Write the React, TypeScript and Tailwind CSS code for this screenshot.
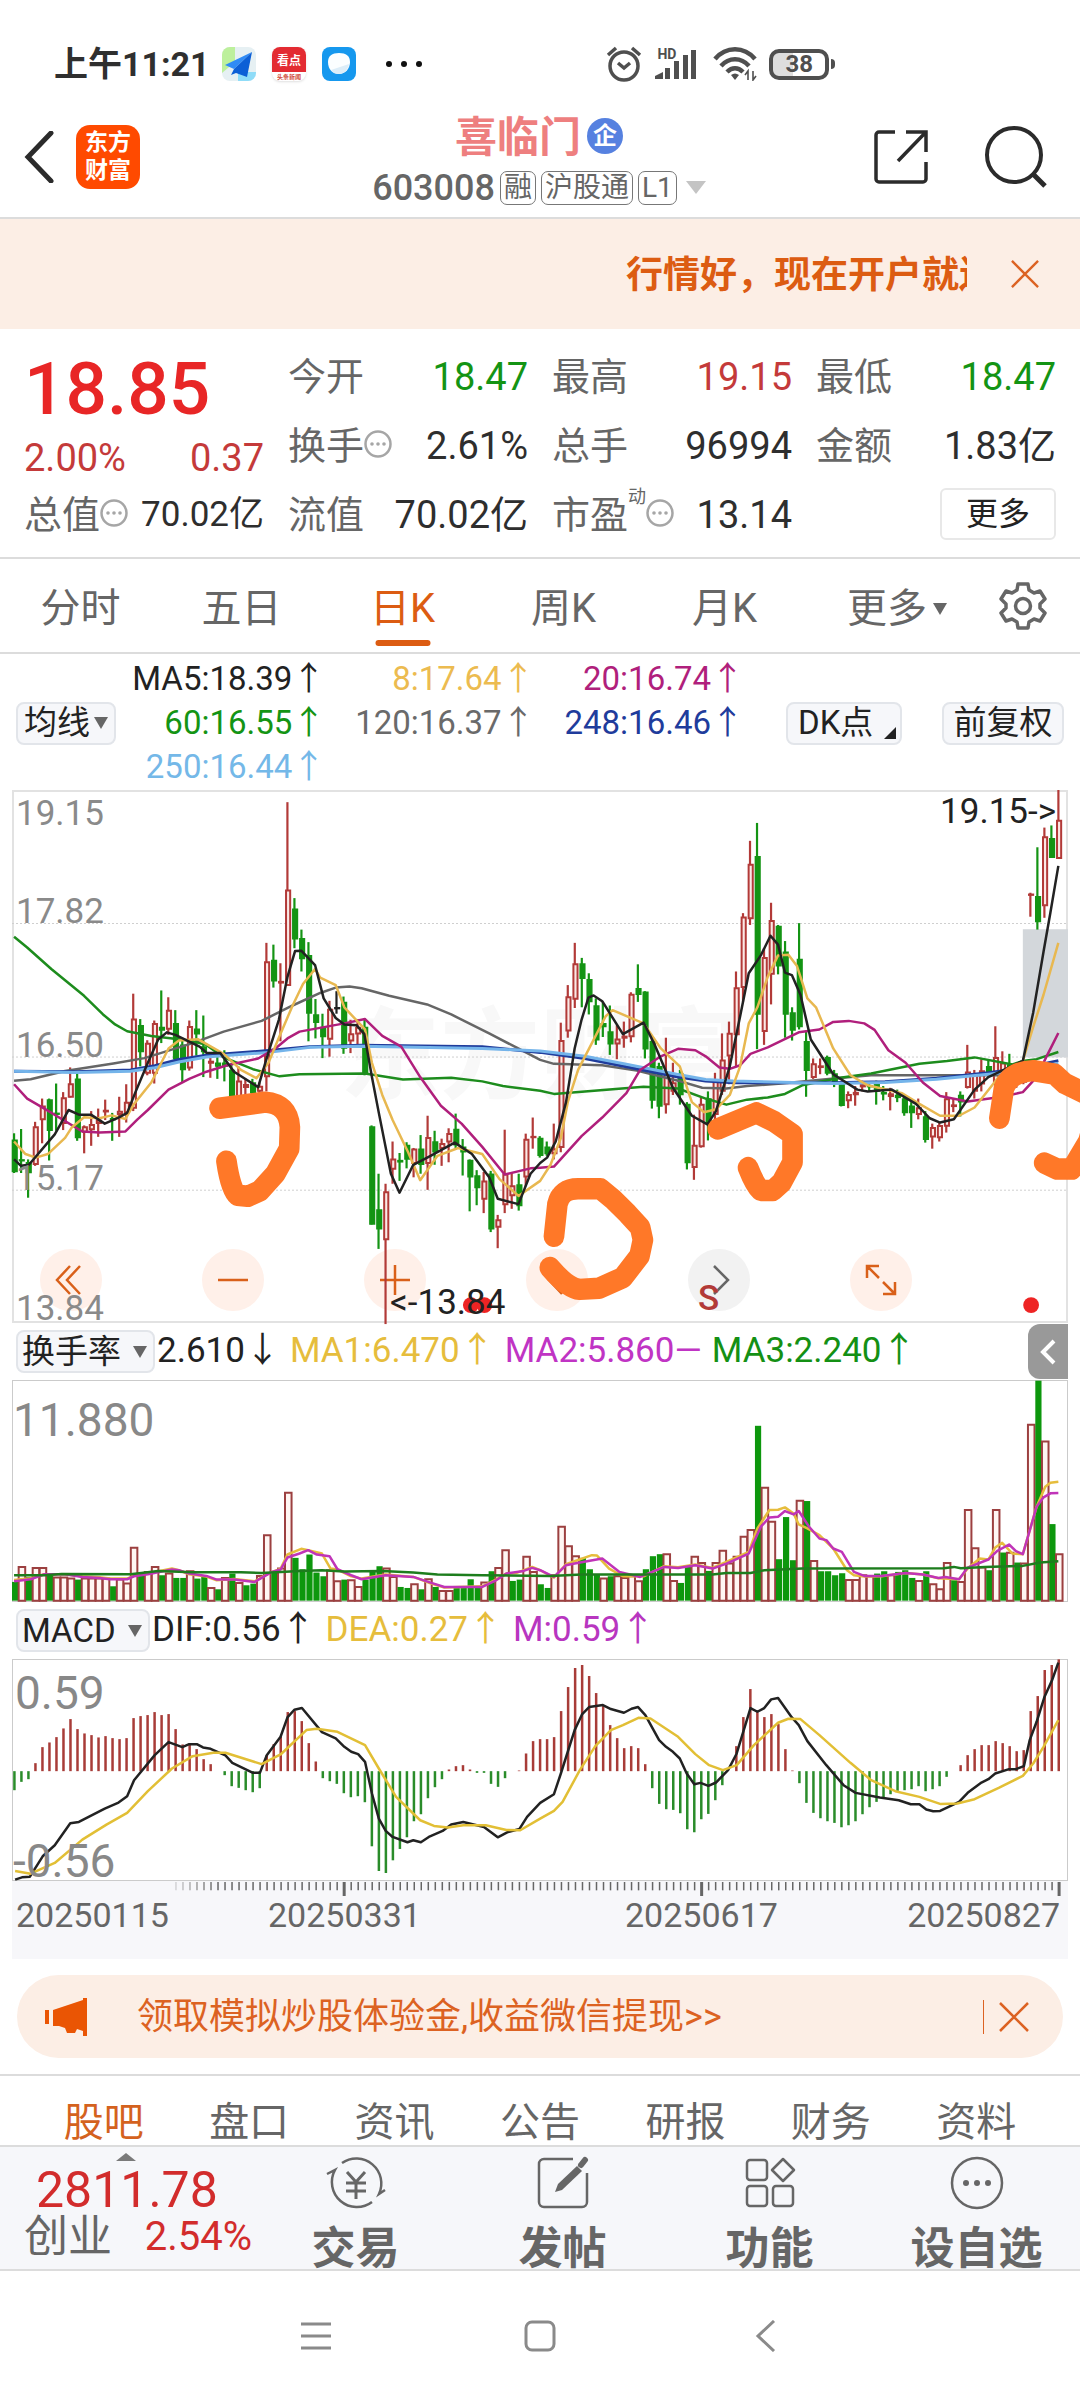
import React from "react";

/**
 * Mobile quote page for a single stock:
 * - status bar, title bar, marquee banner, quote figures and period tabs
 * - daily candles with moving averages, turnover rate and MACD panels
 * - promo strip, content tabs, action bar and the system navigation keys
 *
 * The three panels share one horizontal scale: candle i sits at barX(i).
 */

const PLOT_LEFT = 36;
const PLOT_WIDTH = 3063;
const STEP = 20.33;
const barX = (i: number) => 42 + STEP * i;

const RED = "#b23a38";
const GREEN = "#149414";
const INK = "#222222";

// colour, high, body top, body bottom, low
const CANDLES = `
g987,1005,1095,1098 g975,1060,1065,1098 g1060,1068,1098,1167 r955,968,1075,1078 r890,910,950,1015
g890,893,980,1063 g848,930,935,980 r872,887,960,978 r803,848,887,887 g815,835,1000,1008
r965,968,985,1043 r925,962,978,1022 r918,950,960,997 r893,922,928,950 g930,945,950,1008
r885,925,935,997 r850,900,930,957 r597,667,918,925 g668,685,760,800 r727,735,820,825
r672,680,820,848 g588,690,700,735 r607,643,697,712 g643,680,780,790 g720,740,810,845
r672,688,805,812 g643,695,710,770 g658,745,760,830 r775,785,792,832 g770,790,800,835
g755,790,800,842 g790,810,885,890 r800,840,885,890 r835,850,860,885 g835,845,875,880
r845,855,870,880 r455,507,830,870 g460,503,562,580 r512,562,568,730 r62,307,575,575
g330,360,445,470 g418,442,500,535 g453,490,652,730 g612,655,678,722 g653,690,718,777
r617,640,725,773 k590,635,640,653 g605,620,750,765 r670,708,730,763 r668,690,710,740
g665,690,820,825 g965,968,1242,1242 g1100,1200,1255,1310 r1128,1150,1285,1520 r1010,1058,1088,1128
g1042,1062,1068,1120 g1012,1020,1060,1085 r1028,1030,1072,1110 g992,1030,1075,1100 r938,998,1072,1145
g980,1010,1040,1075 r1002,1015,1030,1078 r973,987,1012,1068 g932,975,1020,1030 g1003,1025,1040,1105
g1060,1062,1110,1205 g1090,1105,1140,1188 r1095,1120,1172,1210 g1092,1100,1255,1263 r1215,1228,1250,1308
r977,1100,1187,1210 r1098,1133,1162,1198 g1100,1130,1190,1203 r988,1003,1110,1135 r943,995,1000,1030
g995,1000,1050,1055 g1010,1025,1045,1050 r960,1030,1045,1060 r678,727,1027,1040 r573,605,702,720
r455,513,613,637 g497,513,555,635 g540,557,620,655 g610,630,727,740 g620,680,690,718
g630,703,738,768 r685,723,738,780 r675,715,722,748 r593,598,718,733 g515,582,600,620
g590,592,752,778 g725,730,895,918 g790,800,912,945 r720,820,908,932 r790,845,870,880
g810,820,880,907 g900,905,1070,1088 r935,1020,1083,1117 r885,905,1025,1027 g870,890,960,1007
r818,840,935,965 r708,782,870,880 r675,707,772,850 r535,580,712,800 r372,382,580,620
r170,235,388,405 g120,213,655,752 r470,495,703,740 r343,392,543,627 g405,408,520,543
g450,480,655,720 g635,650,700,728 g400,500,690,697 g700,730,812,885 r778,792,832,835
r778,798,804,822 g770,775,820,825 g810,820,845,858 g845,850,910,912 r870,878,897,917
r855,872,880,910 r840,850,858,870 g845,853,858,870 g840,848,870,907 g855,872,878,895
r860,876,885,923 g865,880,888,900 g880,890,930,938 g900,910,930,972 r890,915,935,948
g925,940,1005,1013 r960,970,998,1030 r958,965,1000,1010 r872,890,968,985 r890,907,913,928
g870,880,900,940 r740,815,860,862 r810,820,870,890 r780,812,850,870 g785,800,825,830
r688,775,850,862 r758,790,830,870 g765,795,820,880 r800,815,830,860 r778,785,845,850
r315,318,322,382 g188,325,397,418 r133,158,352,385 g127,163,217,218 r28,112,220,220
`
  .trim()
  .split(/\s+/)
  .map((s) => {
    const [high, top, bottom, low] = s.slice(1).split(",").map(Number);
    return { color: s[0] === "r" ? RED : s[0] === "g" ? GREEN : INK, hollow: s[0] === "r", high, top, bottom, low };
  });

const PRICE_LINES: { name: string; color: string; width: number; points: string }[] = [
  {
    name: "MA120",
    color: "#666666",
    width: 2.5,
    points:
      "42,840 90,836 190,813 330,792 420,777 560,735 650,703 760,673 850,630 930,595 975,580 1015,577 1050,582 1130,603 1240,627 1310,655 1420,708 1500,748 1568,782 1608,793 1748,797 1848,812 1968,840 2038,860 2108,862 2168,855 2268,848 2428,833 2528,825 2908,825 2968,812",
  },
  {
    name: "MA60",
    color: "#1d8c1d",
    width: 2.5,
    points:
      "42,438 80,468 150,528 245,603 300,655 335,683 370,702 440,715 550,728 600,740 650,775 735,808 812,828 870,822 1060,820 1170,837 1310,832 1400,842 1460,855 1568,868 1608,877 1868,857 1968,862 2048,890 2108,907 2168,893 2228,887 2278,877 2328,853 2438,832 2528,820 2668,793 2748,785 2828,775 2938,795 2968,785 3008,780 3071,760",
  },
  {
    name: "MA248",
    color: "#1f3c9c",
    width: 3,
    points:
      "42,814 220,815 380,810 450,798 520,781 600,769 780,756 900,745 1050,741 1400,745 1568,761 1698,778 1818,801 1968,830 2048,841 2128,846 2418,846 2568,843 2718,833 2868,818 2968,805 3071,784",
  },
  {
    name: "MA250",
    color: "#74b4ea",
    width: 3,
    points:
      "42,814 220,817 380,814 450,804 520,788 600,774 780,761 900,747 1050,744 1400,750 1568,757 1698,772 1818,794 1968,823 2048,837 2128,841 2418,848 2568,845 2718,836 2868,822 2968,811 3071,791",
  },
  {
    name: "MA20",
    color: "#b01f7c",
    width: 2.5,
    points:
      "42,850 80,890 130,918 240,982 290,985 365,982 400,948 430,922 490,865 550,835 600,815 660,797 750,778 800,750 835,722 870,703 1000,680 1060,668 1110,715 1165,745 1220,830 1280,910 1340,960 1400,1025 1465,1102 1540,1085 1568,1083 1608,1080 1688,995 1748,943 1818,875 1858,810 1918,772 1968,751 2018,755 2048,772 2088,803 2118,807 2148,797 2178,765 2228,747 2318,705 2378,697 2418,676 2463,673 2508,680 2538,698 2578,755 2628,790 2678,845 2728,883 2808,898 2908,885 2968,872 3008,830 3038,770 3071,707",
  },
  {
    name: "MA8",
    color: "#e8b850",
    width: 2.5,
    points:
      "42,1010 75,1045 105,1055 140,1045 190,1000 210,970 245,942 290,945 325,937 365,947 390,905 440,845 490,750 520,728 575,724 650,765 700,810 745,833 780,790 810,720 850,630 880,570 915,528 930,552 975,573 1000,635 1060,697 1080,790 1110,880 1140,950 1185,1040 1220,1118 1270,1050 1330,1028 1400,1045 1450,1115 1505,1162 1568,1120 1598,1075 1628,1000 1648,900 1678,810 1718,735 1758,660 1778,643 1868,680 1918,750 1973,800 2008,900 2043,928 2078,920 2118,880 2148,800 2173,680 2198,635 2228,550 2258,490 2288,488 2313,520 2343,610 2368,635 2418,750 2468,825 2518,853 2618,875 2668,905 2728,938 2783,938 2828,915 2898,830 2968,785 2998,690 3028,600 3071,455",
  },
  {
    name: "MA5",
    color: INK,
    width: 2.5,
    points:
      "42,1060 62,1078 85,1075 160,990 200,922 230,935 265,935 305,960 345,943 370,930 395,870 430,790 460,725 485,705 510,712 580,745 600,762 640,763 680,815 750,858 780,760 810,670 835,550 857,478 875,477 915,517 940,610 975,665 1000,683 1035,685 1058,710 1080,830 1100,930 1135,1100 1160,1153 1200,1075 1250,1050 1320,1013 1370,1045 1420,1110 1445,1170 1505,1185 1540,1100 1568,1070 1588,1055 1613,1010 1643,900 1668,750 1688,670 1708,608 1723,602 1748,618 1808,710 1868,678 1898,735 1953,860 2008,938 2053,962 2078,925 2118,800 2148,660 2173,540 2208,490 2236,435 2258,460 2278,538 2298,545 2323,600 2353,725 2418,822 2488,865 2518,870 2588,865 2658,905 2698,945 2728,957 2768,948 2828,865 2868,830 2968,785 2998,650 3028,480 3048,370 3071,240",
  },
];

// hand-drawn marks over the candles
const MARKS = [
  "M638,917 L770,900 Q838,905 842,970 L840,1030 L800,1100 L755,1148 L720,1163 L690,1160 Q670,1145 658,1065",
  "M1608,1275 L1618,1185 Q1628,1142 1678,1142 L1743,1142 L1778,1170 L1822,1212 L1858,1250 L1866,1285 L1856,1330 L1808,1390 L1738,1420 L1683,1423 Q1648,1420 1596,1362",
  "M2083,975 L2195,930 L2248,955 L2300,990 L2300,1068 L2268,1125 L2243,1147 L2208,1147 Q2190,1130 2171,1083",
  "M2900,945 L2913,862 Q2930,815 2998,812 L3060,822 L3090,848 L3158,880 L3178,940 L3158,1010 L3110,1087 L3068,1087 L3030,1070",
];

const TURNOVER = `
g785 r740 g770 r743 r743 g765 r772 r772 r775 g778 r775 r775 r775 r775 g798 r778 r790 r683 g765 r755
r740 g765 r760 g773 g773 r753 g775 g770 r803 g807 r773 g760 r788 g795 g790 r767 r645 g755 r745 r518
g713 g747 g703 g757 g768 r750 r783 g778 r780 r800 g778 g755 g738 r745 r770 g800 g803 r792 g807 r777
g800 r812 r812 g803 g800 g777 g803 r787 g753 r743 r690 g782 g778 r710 r755 g792 g803 r765 r620 r678
r708 g713 g747 g763 r775 g768 r768 r773 r768 r783 g747 g708 g702 r702 r782 g788 g740 r710 r728 g752
r728 r692 r730 r710 r650 r630 g318 r503 r605 g717 g591 g720 r542 g543 r722 g753 g753 g765 g759 r779
r779 r765 r768 g760 g753 r765 g755 g750 g773 r782 g753 r792 r807 r728 g780 r785 r570 r684 r742 g750
r570 g697 r698 g727 r730 r315 g183 r365 g612 r702
`
  .trim()
  .split(/\s+/)
  .map((s) => ({ hollow: s[0] === "r", top: Number(s.slice(1)) }));

const TURNOVER_LINES = [
  {
    color: "#e6bd3c",
    points:
      "42,779 90,774 130,762 190,762 240,768 290,771 320,775 370,775 390,766 430,760 500,745 520,750 550,762 600,769 630,780 680,776 740,783 765,768 790,755 815,746 835,703 875,686 895,690 935,700 960,745 980,748 1020,768 1050,775 1120,763 1200,770 1250,789 1290,802 1400,798 1440,778 1470,760 1500,758 1545,740 1568,750 1608,772 1643,732 1718,705 1733,706 1768,745 1808,768 1868,768 1928,738 1968,741 2018,733 2068,743 2108,725 2173,695 2198,625 2233,570 2258,569 2278,562 2303,580 2318,613 2343,625 2378,645 2418,685 2458,750 2478,765 2508,769 2558,768 2628,758 2678,763 2723,774 2783,777 2808,745 2843,715 2868,718 2888,682 2908,668 2938,700 2968,702 3008,560 3033,500 3048,488 3071,485",
  },
  {
    color: "#c034b8",
    points:
      "42,783 90,777 130,762 190,762 240,770 290,773 320,777 370,777 390,768 430,762 500,748 520,750 550,760 600,767 630,778 680,778 740,785 765,770 790,755 815,748 835,712 870,700 895,690 920,703 957,708 980,747 1020,765 1050,777 1120,765 1200,770 1250,787 1290,800 1400,800 1440,780 1470,760 1520,752 1545,743 1568,750 1608,770 1643,735 1668,730 1748,715 1798,755 1858,770 1928,740 1968,743 2018,735 2068,745 2108,730 2173,700 2208,620 2233,592 2258,590 2278,573 2303,583 2318,573 2348,620 2378,655 2398,660 2418,685 2443,695 2478,755 2508,767 2558,767 2628,758 2678,763 2723,773 2743,770 2783,777 2808,742 2868,718 2893,693 2928,673 2948,693 2968,702 3008,560 3028,532 3048,520 3071,519",
  },
  {
    color: "#1d7d1d",
    points:
      "42,765 130,765 180,761 380,762 460,752 560,756 700,756 760,758 870,752 935,750 1000,754 1110,752 1200,757 1270,763 1400,765 1598,767 1688,763 2068,763 2108,758 2178,758 2218,750 2328,745 2738,744 2768,740 2788,744 2858,740 2968,737 3018,727 3071,723",
  },
];

const MACD_ZERO = 513;
const MACD = [
  570, 545, 537, 489, 441, 427, 411, 385, 357, 387, 400, 405, 412, 408, 414, 417, 414, 354, 348, 345, 336, 345, 342,
  387, 433, 430, 447, 477, 492, 513, 525, 558, 563, 570, 576, 564, 465, 432, 410, 336, 333, 363, 429, 484, 534, 543,
  551, 579, 591, 588, 606, 738, 812, 818, 780, 746, 711, 663, 642, 594, 561, 537, 508, 498, 495, 508, 518, 518, 551,
  560, 534, 513, 511, 460, 423, 417, 417, 411, 333, 261, 204, 195, 228, 279, 318, 375, 414, 444, 438, 444, 492, 564,
  611, 627, 629, 639, 687, 696, 657, 641, 600, 555, 513, 438, 351, 267, 336, 351, 342, 372, 447, 511, 549, 608, 638,
  654, 663, 668, 681, 675, 663, 642, 621, 605, 595, 582, 572, 570, 567, 558, 573, 567, 558, 530, 513, 495, 465, 447,
  435, 435, 423, 429, 438, 453, 450, 333, 288, 210, 195, 178,
];
const DIF =
  "45,838 65,831 88,829 125,768 160,735 205,669 230,665 305,625 345,607 370,588 390,540 450,465 490,426 530,441 550,432 572,432 590,442 612,446 655,466 675,488 735,518 755,518 775,465 815,410 835,352 855,329 877,324 935,396 975,415 1000,440 1020,455 1040,462 1060,485 1080,580 1100,655 1120,692 1140,710 1183,726 1200,720 1222,726 1245,710 1285,692 1310,673 1345,665 1405,680 1445,711 1475,695 1508,686 1530,650 1568,608 1608,582 1628,520 1668,390 1690,342 1710,321 1750,315 1773,327 1811,338 1833,326 1852,321 1873,345 1913,420 1933,440 1953,455 1973,475 1993,520 2015,552 2033,548 2056,557 2078,547 2113,510 2138,460 2178,324 2198,335 2218,324 2238,298 2258,294 2298,352 2318,375 2343,423 2398,495 2448,555 2483,578 2553,592 2608,600 2643,612 2668,612 2688,628 2708,633 2728,632 2748,622 2783,605 2808,578 2848,547 2868,537 2888,520 2928,507 2948,507 2971,498 2988,420 3008,365 3031,290 3053,240 3071,188";
const DEA =
  "45,812 90,820 160,788 240,718 310,673 370,638 430,573 500,505 560,468 620,458 655,458 760,492 815,463 890,390 920,386 980,395 1060,435 1100,505 1150,590 1220,660 1260,677 1300,682 1345,675 1410,675 1470,689 1510,690 1568,655 1608,632 1633,605 1683,510 1728,438 1773,390 1808,375 1853,353 1888,355 1968,410 2018,462 2058,495 2098,510 2138,495 2188,435 2258,368 2288,356 2323,357 2378,405 2468,488 2528,540 2598,573 2668,590 2728,611 2778,610 2828,597 2898,563 2968,527 2998,490 3028,440 3071,360";

const Line = ({ points, color, width = 2.5 }: { points: string; color: string; width?: number }) => (
  <polyline
    points={points}
    fill="none"
    stroke={color}
    strokeWidth={width}
    strokeLinejoin="round"
    vectorEffect="non-scaling-stroke"
  />
);

const Triangle = ({ className }: { className: string }) => (
  <svg viewBox="0 0 14 12" preserveAspectRatio="none" className={className} fill="currentColor" aria-hidden="true">
    <path d="M0 0h14L7 12z" />
  </svg>
);

const Close = ({ className }: { className: string }) => (
  <svg viewBox="0 0 30 30" className={className} fill="none" stroke="#dc6222" strokeWidth="2.5" aria-hidden="true">
    <path d="M1 1l28 28M29 1L1 29" />
  </svg>
);

const Dots = () => (
  <svg viewBox="0 0 28 28" className="mb-1.5 h-7 w-7 shrink-0 text-[#a6a6a6]" aria-hidden="true">
    <circle cx="14" cy="14" r="12.5" fill="none" stroke="currentColor" strokeWidth="2.5" />
    <g fill="currentColor">
      <circle cx="8" cy="14" r="1.8" />
      <circle cx="14" cy="14" r="1.8" />
      <circle cx="20" cy="14" r="1.8" />
    </g>
  </svg>
);

function StatusBar() {
  return (
    <div className="flex h-24 items-center pt-8 pl-[54px] text-[#2f2f2f]">
      <span className="w-[168px] text-[34px] font-bold whitespace-nowrap">上午11:21</span>
      <div className="flex items-center gap-4">
        <svg viewBox="0 0 34 34" className="h-[34px] w-[34px]" aria-hidden="true">
          <rect width="34" height="34" rx="8" fill="#e6f0f3" />
          <path d="M0 8a8 8 0 0 1 8-8h5v15L0 26z" fill="#bdf09c" />
          <path d="M16 34V25h18v1a8 8 0 0 1-8 8z" fill="#8fdcf8" />
          <path d="M30 5L3 18l9 4z" fill="#2f8bf5" />
          <path d="M30 5L12 22l-3 6 5-2 11 4z" fill="#0c5fd6" />
        </svg>
        <div className="h-[34px] w-[34px] overflow-hidden rounded-lg bg-white text-center shadow-sm">
          <div className="h-[25px] bg-[#e32b32] text-[12px] leading-7 font-bold text-white">看点</div>
          <div className="h-[9px] text-[6px] leading-[9px] font-bold text-[#d04a3a]">头条新闻</div>
        </div>
        <svg viewBox="0 0 34 34" className="h-[34px] w-[34px]" aria-hidden="true">
          <rect width="34" height="34" rx="8" fill="#1698ee" />
          <path d="M17 6c7 0 11 3 11 9 0 7-5 12-11 12S6 23 6 15c0-6 4-9 11-9z" fill="#fbfeff" />
          <path d="M27 17c-1 6-5 10-10 10-3 0-6-1-8-4z" fill="#dcedf8" />
        </svg>
      </div>
      <svg viewBox="0 0 36 6" className="ml-[30px] h-1.5 w-9" fill="#111" aria-hidden="true">
        <circle cx="3" cy="3" r="3" />
        <circle cx="18" cy="3" r="3" />
        <circle cx="33" cy="3" r="3" />
      </svg>
      <div className="ml-auto flex items-center pr-[245px] text-[#4f4f4f]">
        <svg viewBox="0 0 36 36" className="h-9 w-9" fill="none" stroke="currentColor" strokeWidth="3.5" aria-hidden="true">
          <circle cx="18" cy="20" r="14" />
          <path d="M12 17l6 5 6-5M2 9l8-7M34 9l-8-7" />
        </svg>
        <span className="ml-[15px] self-start text-[14px] leading-4 font-bold">HD</span>
        <svg viewBox="0 0 42 30" className="-ml-[21px] h-[30px] w-[42px]" fill="currentColor" aria-hidden="true">
          <path d="M0 30v-3l8-4v7zM10 19h5v11h-5zM19 12h5v18h-5zM28 6h5v24h-5zM36 1h5v29h-5z" />
        </svg>
        <svg viewBox="0 0 44 34" className="ml-4 h-[34px] w-11" aria-hidden="true">
          <g fill="none" stroke="currentColor" strokeWidth="4.5">
            <path d="M2 12c11-13 29-13 40 0M8 19c8-9 20-9 28 0M14 25c5-5 11-5 16 0" />
          </g>
          <path d="M18 28q4-3 8 0l-4 5z" fill="currentColor" />
          <path d="M35 33V24l-3 4M40 24v9l3-4" fill="none" stroke="currentColor" strokeWidth="1.6" />
        </svg>
        <span className="ml-3 rounded-[10px] border-4 border-[#4f4f4f] bg-[linear-gradient(90deg,#dedede_38%,#fff_38%)] px-3 text-[24px] leading-[23px] font-bold">
          38
        </span>
        <span className="ml-0.5 h-2.5 w-1 rounded-r bg-[#4f4f4f]" />
      </div>
    </div>
  );
}

function TitleBar() {
  return (
    <header className="flex h-[123px] items-center justify-between border-b-2 border-[#dcdcdc] px-6 pr-8 text-[#2b2b2b]">
      <div className="flex w-[250px] items-center gap-[22px]">
        <button aria-label="返回">
          <svg viewBox="0 0 30 52" className="h-[52px] w-[30px]" fill="none" stroke="currentColor" strokeWidth="5" aria-hidden="true">
            <path d="M27 2L4 26l23 24" strokeLinecap="round" />
          </svg>
        </button>
        <div className="flex h-16 w-16 items-center justify-center rounded-[14px] bg-[#ff4a00] text-center text-[23px] leading-7 font-bold text-white">
          东方
          <br />
          财富
        </div>
      </div>
      <div className="flex flex-col items-center gap-2 pt-1.5">
        <div className="flex h-12 items-center gap-1.5">
          <h1 className="text-[42px] leading-[48px] font-bold text-[#ee7f7f]">喜临门</h1>
          <span className="mb-1 h-9 w-9 rounded-full bg-[#5681e0] text-center text-[24px] leading-9 font-bold text-white">企</span>
        </div>
        <div className="flex h-9 items-center gap-[5px] text-[#666]">
          <span className="text-[36px] leading-9 font-medium">603008</span>
          {["融", "沪股通", "L1"].map((tag) => (
            <span key={tag} className="rounded-[7px] border border-[#777] px-[3px] text-[28px] leading-8">
              {tag}
            </span>
          ))}
          <Triangle className="ml-1 h-[13px] w-5 text-[#c4c4c4]" />
        </div>
      </div>
      <div className="flex w-[244px] items-center justify-end gap-14">
        <button aria-label="分享">
          <svg viewBox="0 0 54 54" className="h-[54px] w-[54px]" fill="none" stroke="currentColor" strokeWidth="3.5" aria-hidden="true">
            <path d="M21 2H5a3 3 0 0 0-3 3v44a3 3 0 0 0 3 3h44a3 3 0 0 0 3-3V32M32 2h20v20M51 3L24 31" />
          </svg>
        </button>
        <button aria-label="搜索">
          <svg viewBox="0 0 64 64" className="h-16 w-16" fill="none" stroke="currentColor" strokeWidth="4" aria-hidden="true">
            <circle cx="30" cy="30" r="27" />
            <path d="M49 49l12 12" strokeWidth="5" />
          </svg>
        </button>
      </div>
    </header>
  );
}

type QuoteCell = { label: string; value: string; color?: string; info?: boolean; sup?: string };

const QUOTE_TOP: QuoteCell[] = [
  { label: "今开", value: "18.47", color: "text-[#149414]" },
  { label: "最高", value: "19.15", color: "text-[#c43a3a]" },
  { label: "最低", value: "18.47", color: "text-[#149414]" },
  { label: "换手", value: "2.61%", info: true },
  { label: "总手", value: "96994" },
  { label: "金额", value: "1.83亿" },
];
const QUOTE_BOTTOM: QuoteCell[] = [
  { label: "总值", value: "70.02亿", color: "text-[35px] text-[#2e2e2e]", info: true },
  { label: "流值", value: "70.02亿" },
  { label: "市盈", value: "13.14", info: true, sup: "动" },
];

const Cell = ({ label, value, color = "text-[#2e2e2e]", info, sup }: QuoteCell) => (
  <div className="flex h-[69px] items-center justify-between text-[38px] whitespace-nowrap">
    <span className="flex items-center text-[#666]">
      {label}
      {sup && <sup className="mb-5 text-[18px]">{sup}</sup>}
      {info && <Dots />}
    </span>
    <span className={color}>{value}</span>
  </div>
);

function Quote() {
  return (
    <section className="grid grid-cols-4 gap-x-6 border-b-2 border-[#dcdcdc] px-6 pt-3.5 pb-[7px]">
      <div className="row-span-2 flex flex-col">
        <strong className="h-[92px] text-[73px] leading-[92px] font-medium text-[#e82626]">18.85</strong>
        <div className="flex justify-between text-[38px] leading-[46px] text-[#c43a3a]">
          <span>2.00%</span>
          <span>0.37</span>
        </div>
      </div>
      {QUOTE_TOP.map((c) => (
        <Cell key={c.label} {...c} />
      ))}
      {QUOTE_BOTTOM.map((c) => (
        <Cell key={c.label} {...c} />
      ))}
      <div className="flex items-center justify-end">
        <button className="mb-1 h-[52px] rounded-md border-2 border-[#e8e8e8] px-6 text-[32px] leading-[46px] text-[#222]">
          更多
        </button>
      </div>
    </section>
  );
}

function PeriodTabs() {
  return (
    <nav className="grid h-[95px] grid-cols-[repeat(5,161fr)_184fr_91fr] border-b-2 border-[#dcdcdc] text-[40px] text-[#666]">
      {["分时", "五日", "日K", "周K", "月K"].map((t) => (
        <button key={t} className={t === "日K" ? "relative pt-1.5 text-[#dc5c12]" : "relative pt-1.5"}>
          {t}
          {t === "日K" && (
            <span className="absolute bottom-1.5 left-1/2 h-1.5 w-[55px] -translate-x-1/2 rounded-full bg-[#dc5c12]" />
          )}
        </button>
      ))}
      <button className="flex items-center justify-center gap-1.5 pt-1.5">
        更多
        <Triangle className="h-3 w-3.5" />
      </button>
      <button aria-label="设置" className="flex items-center pl-2.5">
        <svg viewBox="0 0 48 48" className="h-12 w-12 shrink-0" fill="none" stroke="currentColor" strokeWidth="3.5" aria-hidden="true">
          <path
            d="M19 2h10l1 6 5 3 6-2 5 8-5 5v4l5 5-5 8-6-2-5 3-1 6H19l-1-6-5-3-6 2-5-8 5-5v-4l-5-5 5-8 6 2 5-3z"
            strokeLinejoin="round"
          />
          <circle cx="24" cy="24" r="7.5" />
        </svg>
      </button>
    </nav>
  );
}

const Picker = ({ label, value, className }: { label: string; value: string; className: string }) => (
  <label className="relative inline-flex items-center">
    <span className="sr-only">{label}</span>
    <select
      className={`h-[43px] appearance-none rounded-lg border-2 border-[#e2e5ea] bg-[#f6f7fa] text-[33px] leading-[38px] text-[#222] ${className}`}
    >
      <option>{value}</option>
    </select>
    <Triangle className="pointer-events-none absolute right-2 h-3 w-3.5 text-[#666]" />
  </label>
);

const MA_VALUES = [
  ["MA5:18.39↑", "text-[#222]"],
  ["8:17.64↑", "text-[#ecbb50]"],
  ["20:16.74↑", "text-[#b01f7c]"],
  ["60:16.55↑", "text-[#149414]"],
  ["120:16.37↑", "text-[#6a6a6a]"],
  ["248:16.46↑", "text-[#1f3c9c]"],
  ["250:16.44↑", "text-[#74b8e8]"],
];

function MaLegend() {
  return (
    <div className="flex items-center px-4 pt-[3px] pb-px text-[33px]">
      <Picker label="指标" value="均线" className="w-[100px] pl-1.5" />
      <div className="grid w-[628px] grid-cols-3 text-right leading-[44px] whitespace-nowrap">
        {MA_VALUES.map(([text, color]) => (
          <span key={text} className={color}>
            {text}
          </span>
        ))}
      </div>
      <div className="ml-auto flex gap-10">
        <button className="relative h-[43px] w-[116px] rounded-lg border-2 border-[#e2e5ea] bg-[#f6f7fa] pl-2.5 text-left leading-[38px] text-[#222]">
          DK点
          <svg viewBox="0 0 12 12" className="absolute right-1 bottom-1 h-3 w-3" aria-hidden="true">
            <path d="M12 0v12H0z" fill="#222" />
          </svg>
        </button>
        <button className="h-[43px] w-[122px] rounded-lg border-2 border-[#e2e5ea] bg-[#f6f7fa] leading-[38px] text-[#222]">
          前复权
        </button>
      </div>
    </div>
  );
}

const CHART_TOOLS: { label: string; path: string; muted?: boolean }[] = [
  { label: "回到最早", path: "M30 17L17 31l13 14M40 17L27 31l13 14" },
  { label: "缩小", path: "M16 31h30" },
  { label: "放大", path: "M16 31h30M31 16v30" },
  { label: "向左", path: "M36 17L23 31l13 14" },
  { label: "向右", path: "M26 17l14 14-14 14", muted: true },
  { label: "全屏", path: "M17 29V17h12M17 17l12 12M45 33v12H33M45 45L33 33" },
];

function PriceChart() {
  return (
    <div className="relative h-[533px] border-2 border-[#e2e2e2] text-[35px] leading-9">
      <div className="absolute inset-0 flex items-center justify-center text-[100px] font-bold text-[#f8f8f8]">东方财富</div>
      <div className="absolute bottom-2.5 left-[26px] flex gap-[100px]">
        {CHART_TOOLS.map((t) => (
          <button
            key={t.label}
            aria-label={t.label}
            className={t.muted ? "rounded-full bg-[#f2f2f2] text-[#666]" : "rounded-full bg-[#fff0e9] text-[#d9601a]"}
          >
            <svg viewBox="0 0 62 62" className="h-[62px] w-[62px]" fill="none" stroke="currentColor" strokeWidth="2.5" aria-hidden="true">
              <path d={t.path} />
            </svg>
          </button>
        ))}
      </div>
      <svg
        viewBox={`${PLOT_LEFT} 28 ${PLOT_WIDTH} 1489`}
        preserveAspectRatio="none"
        className="pointer-events-none absolute -inset-0.5 h-[calc(100%+4px)] w-[calc(100%+4px)] overflow-visible"
        aria-label="日K线"
      >
        {[401, 774, 1146].map((y) => (
          <path key={y} d={`M36,${y}H3099`} stroke="#cfcfcf" strokeDasharray="2 2" vectorEffect="non-scaling-stroke" />
        ))}
        <rect x="2968" y="417" width="131" height="358" fill="#d3d7db" />
        {CANDLES.map((c, i) => (
          <g key={i} stroke={c.color}>
            <path d={`M${barX(i)},${c.high}V${c.low}`} strokeWidth="2.2" vectorEffect="non-scaling-stroke" />
            <rect
              x={barX(i) - 4}
              y={c.top + 2}
              width="12"
              height={Math.max(c.bottom - c.top - 4, 1)}
              fill={c.hollow ? "#fbe9e6" : c.color}
              strokeWidth="2"
              vectorEffect="non-scaling-stroke"
            />
          </g>
        ))}
        {PRICE_LINES.map((l) => (
          <Line key={l.name} {...l} />
        ))}
        <g fill="#ee2424">
          <ellipse cx="1367" cy="1467" rx="23" ry="22" />
          <ellipse cx="1406" cy="1467" rx="23" ry="22" />
          <ellipse cx="2992" cy="1467" rx="23" ry="22" />
        </g>
      </svg>
      <div className="text-[#8a8a8a]">
        <span className="absolute top-1 left-0.5">19.15</span>
        <span className="absolute top-[102px] left-0.5">17.82</span>
        <span className="absolute top-[236px] left-0.5">16.50</span>
        <span className="absolute top-[369px] left-0.5">15.17</span>
        <span className="absolute -bottom-1.5 left-0.5">13.84</span>
      </div>
      <span className="absolute top-0.5 right-2.5 text-[#222]">19.15-&gt;</span>
      <span className="absolute bottom-0 left-[376px] text-[#222]">&lt;-13.84</span>
      <span className="absolute bottom-1 left-[684px] font-medium text-[#b23a38]">S</span>
      <svg
        viewBox={`${PLOT_LEFT} 28 ${PLOT_WIDTH} 1489`}
        preserveAspectRatio="none"
        className="pointer-events-none absolute -inset-0.5 h-[calc(100%+4px)] w-[calc(100%+4px)] overflow-visible"
        aria-hidden="true"
      >
        {MARKS.map((d) => (
          <path key={d} d={d} fill="none" stroke="#ff7828" strokeWidth="60" strokeLinecap="round" strokeLinejoin="round" />
        ))}
      </svg>
    </div>
  );
}

function TurnoverPanel() {
  return (
    <>
      <div className="flex h-[57px] items-center pl-1 text-[35px] whitespace-nowrap">
        <Picker label="副图一" value="换手率" className="w-[139px] pl-1" />
        <p className="ml-0.5 flex gap-2.5">
          <span className="text-[#222]">2.610↓</span>
          <span className="text-[#e6bd3c]">MA1:6.470↑</span>
          <span className="text-[#c034c4]">MA2:5.860—</span>
          <span className="text-[#149014]">MA3:2.240↑</span>
        </p>
        <button aria-label="收起" className="ml-auto flex h-[55px] w-10 items-center justify-center rounded-l-xl bg-[#999]">
          <svg viewBox="0 0 16 26" className="h-[26px] w-4" fill="none" stroke="#fff" strokeWidth="4" aria-hidden="true">
            <path d="M14 2L3 13l11 11" />
          </svg>
        </button>
      </div>
      <div className="relative h-[222px] border border-[#cbcbcb]">
        <svg
          viewBox={`${PLOT_LEFT} 181 ${PLOT_WIDTH} 664`}
          preserveAspectRatio="none"
          className="absolute -inset-px h-[calc(100%+2px)] w-[calc(100%+2px)]"
          aria-label="换手率"
        >
          {TURNOVER.map((b, i) =>
            b.hollow ? (
              <rect
                key={i}
                x={barX(i) - 7}
                y={b.top}
                width="19"
                height={841 - b.top}
                fill="#fff6f3"
                stroke="#9c4040"
                strokeWidth="2"
                vectorEffect="non-scaling-stroke"
              />
            ) : (
              <rect key={i} x={barX(i) - 6} y={b.top} width="18" height={841 - b.top} fill="#0d970d" />
            ),
          )}
          {TURNOVER_LINES.map((l) => (
            <Line key={l.color} {...l} />
          ))}
        </svg>
        <span className="absolute top-3.5 left-0 text-[46px] leading-[50px] text-[#888]">11.880</span>
      </div>
    </>
  );
}

function MacdPanel() {
  return (
    <>
      <div className="flex h-[57px] items-center pl-1 text-[35px] whitespace-nowrap">
        <Picker label="副图二" value="MACD" className="w-[134px] pl-1" />
        <p className="ml-0.5 flex gap-2.5">
          <span className="text-[#222]">DIF:0.56↑</span>
          <span className="text-[#e6bd3c]">DEA:0.27↑</span>
          <span className="text-[#b836c0]">M:0.59↑</span>
        </p>
      </div>
      <div className="relative h-[222px] border border-[#cbcbcb]">
        <svg
          viewBox={`${PLOT_LEFT} 177 ${PLOT_WIDTH} 665`}
          preserveAspectRatio="none"
          className="absolute -inset-px h-[calc(100%+2px)] w-[calc(100%+2px)]"
          aria-label="MACD"
        >
          {MACD.map((y, i) => (
            <path
              key={i}
              d={`M${barX(i) + 1},${MACD_ZERO}V${y}`}
              stroke={y < MACD_ZERO ? "#a83c38" : "#2a8c2a"}
              strokeWidth="2.5"
              vectorEffect="non-scaling-stroke"
            />
          ))}
          <Line points={DIF} color={INK} />
          <Line points={DEA} color="#e2bf35" />
        </svg>
        <span className="absolute top-2 left-0.5 text-[46px] leading-[50px] text-[#888]">0.59</span>
        <span className="absolute -bottom-1.5 left-0 text-[46px] leading-[50px] text-[#888]">-0.56</span>
      </div>
    </>
  );
}

function DateAxis() {
  const ticks = Array.from({ length: 127 }, (_, k) => k + 23);
  return (
    <div className="h-[78px] bg-[#f7f7fa] text-[34px] leading-9 text-[#666]">
      <svg viewBox={`${PLOT_LEFT} 0 ${PLOT_WIDTH} 48`} preserveAspectRatio="none" className="block h-4 w-full" aria-hidden="true">
        {ticks.map((i) => {
          const major = i === 47 || i === 98 || i === 149;
          return (
            <path
              key={i}
              d={`M${barX(i) + 2},3V${major ? 45 : 28}`}
              stroke="#666"
              strokeWidth={major ? 3 : 1.5}
              strokeOpacity={Math.min(1, (i - 21) / 8)}
              vectorEffect="non-scaling-stroke"
            />
          );
        })}
      </svg>
      <div className="flex pr-2 pl-1">
        <span className="w-[252px]">20250115</span>
        <span className="w-[357px]">20250331</span>
        <span>20250617</span>
        <span className="ml-auto">20250827</span>
      </div>
    </div>
  );
}

function Promo() {
  return (
    <div className="mx-[17px] my-4 flex h-[83px] items-center rounded-full bg-[#fceee5] pr-[34px] pl-7 text-[#dc6222]">
      <svg viewBox="0 0 42 38" className="h-[38px] w-[42px]" fill="#ea5504" aria-hidden="true">
        <path d="M0 12h4v14H0zM8 12L38 2V0h4v38h-4v-5l-6-2-2 4h-8l-2-5-6-2H8z" />
      </svg>
      <a href="#promo" className="ml-[50px] text-[36px] whitespace-nowrap">
        领取模拟炒股体验金,收益微信提现&gt;&gt;
      </a>
      <span className="ml-auto h-[34px] w-px bg-[#dc6222]" />
      <button aria-label="关闭推广" className="ml-[15px]">
        <Close className="h-[30px] w-[30px]" />
      </button>
    </div>
  );
}

const ACTIONS: { label: string; icon: React.ReactNode }[] = [
  {
    label: "交易",
    icon: (
      <>
        <path d="M17 8A25 25 0 0 1 54 39l6-4M47 47A25 25 0 0 1 10 15l-8 4" />
        <path d="M22 17l9 10 9-10M21 28h20M21 36h20M31 27v17" strokeWidth="3" />
      </>
    ),
  },
  {
    label: "发帖",
    icon: (
      <>
        <path d="M41 4H12a5 5 0 0 0-5 5v38a5 5 0 0 0 5 5h38a5 5 0 0 0 5-5V18" />
        <path d="M23 37l3-8 19-18 5 5-20 19z" fill="currentColor" stroke="none" />
        <path d="M49 10l4-5" strokeWidth="6" strokeLinecap="round" />
      </>
    ),
  },
  {
    label: "功能",
    icon: (
      <>
        <rect x="8" y="5" width="20" height="20" rx="3" />
        <rect x="8" y="31" width="20" height="20" rx="3" />
        <rect x="34" y="31" width="20" height="20" rx="3" />
        <path d="M44 4l11 11-11 11-11-11z" strokeLinejoin="round" />
      </>
    ),
  },
  {
    label: "设自选",
    icon: (
      <>
        <circle cx="31" cy="28" r="25" />
        <g fill="currentColor" stroke="none">
          <circle cx="20" cy="28" r="3" />
          <circle cx="31" cy="28" r="3" />
          <circle cx="42" cy="28" r="3" />
        </g>
      </>
    ),
  },
];

function BottomBar() {
  return (
    <footer className="flex h-[126px] border-y-2 border-[#dcdcdc] bg-[#f6f7fa]">
      <button className="relative flex w-[252px] flex-col items-start pt-[18px]">
        <Triangle className="absolute top-1.5 left-1/2 h-2 w-5 -translate-x-1/2 rotate-180 text-[#7a7a7a]" />
        <span className="pl-9 text-[50px] leading-[50px] text-[#d22c2c]">2811.78</span>
        <span className="flex w-full items-center justify-between pl-6 leading-[44px]">
          <span className="text-[44px] text-[#666]">创业</span>
          <span className="text-[40px] text-[#d22c2c]">2.54%</span>
        </span>
      </button>
      <div className="grid flex-1 grid-cols-4">
        {ACTIONS.map((a) => (
          <button key={a.label} className="flex flex-col items-center pt-2 text-[#666]">
            <svg viewBox="0 0 62 56" className="h-14 w-[62px] shrink-0" fill="none" stroke="currentColor" strokeWidth="2.5" aria-hidden="true">
              {a.icon}
            </svg>
            <span className="pt-[18px] text-[44px] leading-10 font-bold">{a.label}</span>
          </button>
        ))}
      </div>
    </footer>
  );
}

function SystemKeys() {
  return (
    <div className="flex h-[130px] items-center justify-center gap-[192px] text-[#8a8a8a]">
      <button aria-label="最近任务">
        <svg viewBox="0 0 32 32" className="h-8 w-8" stroke="currentColor" strokeWidth="3" aria-hidden="true">
          <path d="M1 4h30M1 16h30M1 28h30" />
        </svg>
      </button>
      <button aria-label="主屏幕">
        <svg viewBox="0 0 32 32" className="h-8 w-8" fill="none" stroke="currentColor" strokeWidth="3" aria-hidden="true">
          <rect x="2" y="2" width="28" height="28" rx="6" />
        </svg>
      </button>
      <button aria-label="后退">
        <svg viewBox="0 0 32 32" className="h-8 w-8" fill="none" stroke="currentColor" strokeWidth="3" aria-hidden="true">
          <path d="M26 1L10 16l16 15" />
        </svg>
      </button>
    </div>
  );
}

export default function App() {
  return (
    <main className="overflow-x-hidden bg-white font-['Roboto','Noto_Sans_CJK_SC',sans-serif]">
      <StatusBar />
      <TitleBar />
      <div className="flex h-[110px] items-center justify-end bg-[#fceee5] pr-[41px]">
        <p className="w-[341px] overflow-hidden pt-1 text-[37px] font-bold whitespace-nowrap text-[#dc5c12]">
          行情好，现在开户就送
        </p>
        <button aria-label="关闭公告" className="ml-11">
          <Close className="h-7 w-7" />
        </button>
      </div>
      <Quote />
      <PeriodTabs />
      <MaLegend />
      <div className="mx-3">
        <PriceChart />
        <TurnoverPanel />
        <MacdPanel />
        <DateAxis />
      </div>
      <Promo />
      <nav className="grid h-[71px] grid-cols-7 border-t-2 border-[#dcdcdc] px-[31px] pt-[25px] text-[40px] leading-[44px] text-[#666]">
        {["股吧", "盘口", "资讯", "公告", "研报", "财务", "资料"].map((t) => (
          <button key={t} className={t === "股吧" ? "text-[#d4621e]" : ""}>
            {t}
          </button>
        ))}
      </nav>
      <BottomBar />
      <SystemKeys />
    </main>
  );
}
